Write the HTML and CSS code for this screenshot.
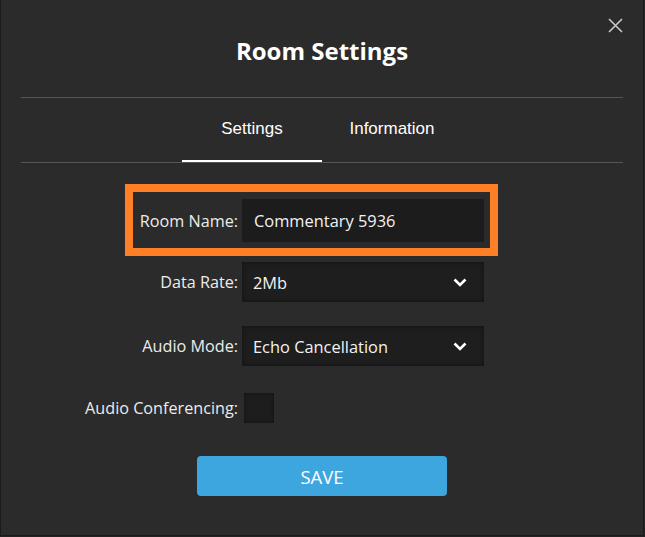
FILE: index.html
```html
<!DOCTYPE html>
<html>
<head>
<meta charset="utf-8">
<link rel="stylesheet" href="styles.css">
</head>
<body>
<div class="dialog">
  <button class="close" aria-label="Close">
    <svg width="15" height="15" viewBox="0 0 15 15"><path d="M1 1L14 14M14 1L1 14" stroke="#c8c8c8" stroke-width="1.6" fill="none"/></svg>
  </button>
  <h1 class="title">Room Settings</h1>
  <div class="tabs">
    <div class="tab active">Settings</div>
    <div class="tab">Information</div>
  </div>
  <div class="form">
    <div class="highlight"></div>
    <label class="label">Room Name:</label>
    <div class="input">Commentary 5936</div>
    <label class="label">Data Rate:</label>
    <div class="select short"><span>2Mb</span>
      <svg width="14" height="9" viewBox="0 0 14 9"><path d="M1.5 1.5L7 7L12.5 1.5" stroke="#fff" stroke-width="2.6" fill="none"/></svg>
    </div>
    <label class="label">Audio Mode:</label>
    <div class="select"><span>Echo Cancellation</span>
      <svg width="14" height="9" viewBox="0 0 14 9"><path d="M1.5 1.5L7 7L12.5 1.5" stroke="#fff" stroke-width="2.6" fill="none"/></svg>
    </div>
    <label class="label">Audio Conferencing:</label>
    <div class="checkbox"></div>
  </div>
  <div class="actions">
    <button class="save">SAVE</button>
  </div>
</div>
</body>
</html>
```
FILE: styles.css
```css
html, body {
  margin: 0;
  padding: 0;
  background: #232323;
}
.dialog {
  position: relative;
  box-sizing: border-box;
  width: 644px;
  height: 536px;
  background: #2b2b2b;
  border-left: 1px solid #1b1b1b;
  border-right: 1px solid #1b1b1b;
  border-bottom: 1px solid #1b1b1b;
  padding: 35px 20px 0;
  font-family: "Open Sans", "Noto Sans", sans-serif;
  color: #ececec;
}
.close {
  position: absolute;
  top: 18px;
  right: 20px;
  width: 15px;
  height: 15px;
  padding: 0;
  border: 0;
  background: none;
  display: block;
}
.close svg { display: block; }
.title {
  margin: 0;
  padding-bottom: 30px;
  border-bottom: 1px solid #565656;
  text-align: center;
  font-size: 24px;
  line-height: 32px;
  font-weight: 700;
  color: #ffffff;
}
.tabs {
  display: flex;
  justify-content: center;
  border-bottom: 1px solid #565656;
}
.tab {
  width: 140px;
  box-sizing: border-box;
  padding-top: 21px;
  height: 64px;
  text-align: center;
  font-family: "Liberation Sans", Arial, sans-serif;
  font-size: 17px;
  line-height: 20px;
  color: #ffffff;
  border-bottom: 2px solid transparent;
}
.tab.active {
  border-bottom-color: #ffffff;
}
.form {
  position: relative;
  margin-top: 27px;
  display: grid;
  grid-template-columns: 217px 242px;
  column-gap: 4px;
  grid-template-rows: 61px 62px 66px 58px;
  align-items: center;
}
.highlight {
  position: absolute;
  left: 104px;
  top: -6px;
  width: 373px;
  height: 72px;
  box-sizing: border-box;
  border: 8px solid #ff7f27;
  pointer-events: none;
}
.label {
  text-align: right;
  font-size: 16.2px;
  line-height: 22px;
  color: #ececec;
}
.input {
  height: 43px;
  box-sizing: border-box;
  background: #1c1c1c;
  padding: 0 12px;
  display: flex;
  align-items: center;
  font-size: 16.4px;
  color: #f2f2f2;
}
.select {
  height: 40px;
  box-sizing: border-box;
  background: #1e1e1e;
  box-shadow: inset 0 0 5px rgba(0,0,0,0.45);
  padding: 0 17px 0 11px;
  display: flex;
  align-items: center;
  justify-content: space-between;
  font-size: 16.4px;
  color: #f2f2f2;
}
.select svg { display: block; }
.checkbox {
  width: 30px;
  height: 30px;
  margin-left: 2px;
  background: #1d1d1d;
  box-shadow: inset 0 0 4px rgba(0,0,0,0.4);
}
.actions {
  display: flex;
  justify-content: center;
  margin-top: 19px;
}
.save {
  width: 250px;
  height: 40px;
  border: 0;
  border-radius: 4px;
  background: #3ea6df;
  color: #ffffff;
  font-family: "Open Sans", "Noto Sans", sans-serif;
  font-size: 18.5px;
  padding: 0;
}
```
